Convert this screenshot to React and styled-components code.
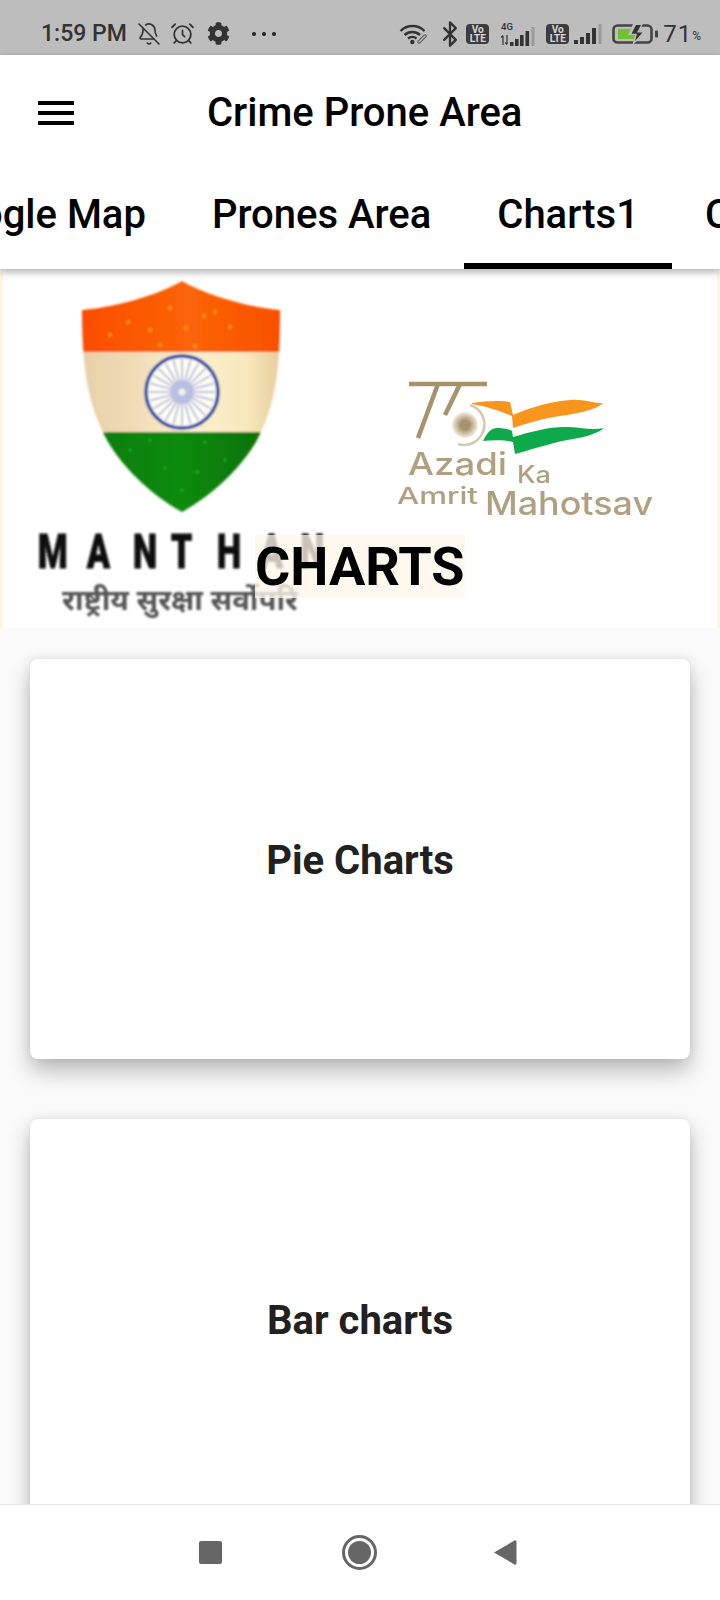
import React from "react";
import styled, { createGlobalStyle } from "styled-components";
import { BellOff, AlarmClock, Bluetooth } from "lucide-react";
import { FaCog } from "react-icons/fa";

const Global = createGlobalStyle`
  html, body { margin: 0; padding: 0; background: #fafafa; }
  body { font-family: Roboto, "Liberation Sans", sans-serif; }
  * { box-sizing: border-box; }
`;

const Page = styled.div`
  width: 720px;
  height: 1600px;
  display: flex;
  flex-direction: column;
  overflow: hidden;
  background: #fafafa;
`;

const StatusBar = styled.div`
  height: 55px;
  flex: none;
  background: #bdbdbd;
  color: #333;
  display: flex;
  align-items: center;
  justify-content: space-between;
  padding: 12px 19px 0 41px;
`;

const StatusGroup = styled.div`
  display: flex;
  align-items: center;
`;

const Slot = styled.span`
  display: flex;
  align-items: center;
  margin-left: ${(p) => p.$gap || 0}px;
`;

const Time = styled.span`
  font-size: 23px;
  font-weight: 500;
  line-height: 26px;
  color: #333;
  white-space: nowrap;
`;

const Dots = styled.span`
  display: flex;
  gap: 6px;
  margin-left: 22px;
  & > i {
    width: 4px;
    height: 4px;
    border-radius: 50%;
    background: #222;
  }
`;

const VoLte = styled.span`
  width: 23px;
  height: 20px;
  border-radius: 4px;
  background: #3c3c3c;
  color: #d8d8d8;
  display: flex;
  flex-direction: column;
  align-items: center;
  justify-content: center;
  font-size: 10px;
  font-weight: 700;
  line-height: 9px;
`;

const Percent = styled.span`
  font-size: 24px;
  font-weight: 400;
  line-height: 26px;
  letter-spacing: 1px;
  color: #333;
`;

const PercentSign = styled.span`
  font-size: 12px;
  line-height: 26px;
  margin-top: 5px;
  color: #333;
`;

const Header = styled.header`
  position: relative;
  z-index: 2;
  flex: none;
  background: #fff;
  box-shadow: 0 3px 8px rgba(0, 0, 0, 0.32);
`;

const AppBar = styled.div`
  height: 100px;
  display: flex;
  align-items: center;
  padding: 15px 0 0 38px;
`;

const Title = styled.h1`
  margin: 0 0 0 133px;
  font-size: 40px;
  font-weight: 500;
  color: #000;
  line-height: 46px;
  white-space: nowrap;
`;

const TabBar = styled.nav`
  height: 114px;
  display: flex;
  overflow: hidden;
  margin-left: -103px;
`;

const Tab = styled.div`
  flex: none;
  height: 100%;
  padding: 11px 33px 1px;
  display: flex;
  align-items: center;
  font-size: 40px;
  font-weight: 500;
  color: #000;
  white-space: nowrap;
  border-bottom: 6px solid ${(p) => (p.$active ? "#000" : "transparent")};
`;

const Content = styled.main`
  flex: 1;
  min-height: 0;
  overflow: hidden;
`;

const Banner = styled.section`
  position: relative;
  height: 359px;
  display: flex;
  background: #fff;
  border-left: 3px solid #fff3e4;
  border-right: 3px solid #fff3e4;
`;

const LeftLogo = styled.svg`
  flex: none;
  margin-left: 27px;
  width: 310px;
  height: 359px;
`;

const RightLogo = styled.svg`
  flex: none;
  margin-left: 50px;
  width: 280px;
  height: 359px;
`;

const Heading = styled.h2`
  position: absolute;
  left: 252px;
  top: 266px;
  margin: 0;
  height: 63px;
  background: rgba(255, 246, 235, 0.78);
  font-size: 54px;
  font-weight: 700;
  line-height: 63px;
  color: #000;
  white-space: nowrap;
`;

const CardList = styled.div`
  padding: 31px 30px 0;
  display: flex;
  flex-direction: column;
  gap: 60px;
`;

const Card = styled.div`
  flex: none;
  height: 400px;
  padding-top: 2px;
  border-radius: 8px;
  background: #fff;
  display: flex;
  align-items: center;
  justify-content: center;
  font-size: 40px;
  font-weight: 700;
  color: #212121;
  box-shadow: 0 12px 22px rgba(0, 0, 0, 0.26), 0 0 10px rgba(0, 0, 0, 0.08);
`;

const NavBar = styled.footer`
  position: relative;
  z-index: 2;
  flex: none;
  height: 96px;
  background: #fff;
  border-top: 1px solid #e6e6e6;
  display: flex;
  align-items: center;
  padding: 0 0 0 199px;
`;

const NavSquare = styled.span`
  width: 23px;
  height: 23px;
  border-radius: 2px;
  background: #666;
`;

const NavHome = styled.span`
  width: 35px;
  height: 35px;
  margin-left: 120px;
  border-radius: 50%;
  border: 3px solid #666;
  padding: 3px;
  &::before {
    content: "";
    display: block;
    width: 23px;
    height: 23px;
    border-radius: 50%;
    background: #666;
  }
`;

const NavBack = styled.svg`
  width: 24px;
  height: 27px;
  margin-left: 116px;
`;

const Wifi = () => (
  <svg width="28" height="22" viewBox="0 0 28 22" fill="none">
    <path d="M1.5 8 A17 17 0 0 1 25.5 8" stroke="#333" strokeWidth="2.4" />
    <path d="M5.5 12 A11.5 11.5 0 0 1 21 12" stroke="#333" strokeWidth="2.4" />
    <path d="M9 15.5 A6.5 6.5 0 0 1 17.5 15.5" stroke="#333" strokeWidth="2.4" />
    <circle cx="13.3" cy="19" r="2.2" fill="#333" />
    <path d="M20 19 L26 13" stroke="#555" strokeWidth="3.4" strokeLinecap="round" />
    <path d="M20 19 L26 13" stroke="#bdbdbd" strokeWidth="1.4" strokeLinecap="round" />
  </svg>
);

const Signal4G = () => (
  <svg width="37" height="24" viewBox="0 0 37 24">
    <text x="1" y="8" fontFamily="Roboto, sans-serif" fontSize="9.5" fontWeight="500" fill="#333">4G</text>
    <path d="M3 23V14M1.2 15.5L3 13.5M7 13V22M5.2 20.5L7 22.5" stroke="#333" strokeWidth="1.2" fill="none" />
    <rect x="10" y="20" width="3.6" height="4" fill="#333" />
    <rect x="15" y="17" width="3.6" height="7" fill="#333" />
    <rect x="20" y="13" width="3.6" height="11" fill="#333" />
    <rect x="25.5" y="9" width="3.6" height="15" fill="#333" />
    <rect x="31.5" y="5" width="3" height="19" fill="#999" />
  </svg>
);

const Signal = () => (
  <svg width="28" height="20" viewBox="0 0 28 20">
    <rect x="0" y="16" width="4" height="4" fill="#333" />
    <rect x="6" y="13" width="4" height="7" fill="#333" />
    <rect x="12" y="9" width="4" height="11" fill="#333" />
    <rect x="18" y="4" width="4" height="16" fill="#333" />
    <rect x="24.5" y="0" width="3" height="20" fill="#999" />
  </svg>
);

const Battery = () => (
  <svg width="46" height="24" viewBox="0 0 46 24">
    <rect x="1.5" y="3.5" width="38" height="17" rx="4" fill="none" stroke="#444" strokeWidth="2.6" />
    <rect x="43" y="8.5" width="3" height="7" rx="1" fill="#444" />
    <rect x="6" y="7" width="22" height="10" fill="#6cc22f" />
    <path d="M22 0 L32 0 L27 9 L34 9 L20 24 L23 13 L16 13 Z" fill="#bdbdbd" />
    <path d="M24 3 L29 3 L25 10.5 L30.5 10.5 L23 19 L25 11.8 L19.5 11.8 Z" fill="#333" />
  </svg>
);

const SPECKS = [
  [128, 322], [150, 330], [170, 308], [186, 328], [204, 316], [230, 327], [195, 346], [215, 312], [160, 345], [110, 335],
];
const GREEN_SPECKS = [
  [165, 468], [197, 472], [225, 460], [130, 450], [182, 490], [205, 442], [150, 440],
];

const ManthanLogo = () => (
  <LeftLogo viewBox="30 269 310 359" role="img" aria-label="Manthan">
    <defs>
      <clipPath id="shieldClip">
        <path d="M182 281 C160 294 118 307 82 310 C82 370 88 405 108 442 C126 472 155 497 182 512 C209 497 238 472 256 442 C276 405 280 370 280 310 C246 307 204 294 182 281 Z" />
      </clipPath>
      <linearGradient id="cream" x1="0" x2="1" y1="0" y2="0">
        <stop offset="0" stopColor="#e5cda4" />
        <stop offset="0.3" stopColor="#f1dcb6" />
        <stop offset="0.55" stopColor="#fbf0cf" />
        <stop offset="0.8" stopColor="#f8e8bd" />
        <stop offset="1" stopColor="#e4c694" />
      </linearGradient>
      <linearGradient id="saffron" x1="0" x2="1" y1="0" y2="0">
        <stop offset="0" stopColor="#fb4a05" />
        <stop offset="0.55" stopColor="#fb6407" />
        <stop offset="1" stopColor="#f94d04" />
      </linearGradient>
      <linearGradient id="greenBand" x1="0" x2="1" y1="0" y2="0">
        <stop offset="0" stopColor="#0a7a08" />
        <stop offset="0.5" stopColor="#0b8a08" />
        <stop offset="1" stopColor="#066a06" />
      </linearGradient>
      <filter id="soft" x="-5%" y="-5%" width="110%" height="110%">
        <feGaussianBlur stdDeviation="0.8" />
      </filter>
    </defs>
    <g filter="url(#soft)">
      <g clipPath="url(#shieldClip)">
        <rect x="70" y="275" width="220" height="77" fill="url(#saffron)" />
        <rect x="70" y="352" width="220" height="80" fill="url(#cream)" />
        <rect x="70" y="432" width="220" height="85" fill="url(#greenBand)" />
        {SPECKS.map(([x, y]) => (
          <circle key={`${x}-${y}`} cx={x} cy={y} r="2" fill="#ff9a1a" />
        ))}
        {GREEN_SPECKS.map(([x, y]) => (
          <circle key={`${x}-${y}`} cx={x} cy={y} r="1.6" fill="#22b022" />
        ))}
      </g>
      <circle cx="182" cy="392" r="36" fill="#fffdf2" stroke="#1f3fa6" strokeWidth="3.5" />
      {Array.from({ length: 24 }, (_, i) => {
        const a = (i * Math.PI) / 12;
        return (
          <line
            key={i}
            x1={182 + 8 * Math.cos(a)}
            y1={392 + 8 * Math.sin(a)}
            x2={182 + 33 * Math.cos(a)}
            y2={392 + 33 * Math.sin(a)}
            stroke="#b4bbdf"
            strokeWidth="1.8"
          />
        );
      })}
      <circle cx="182" cy="392" r="12" fill="#b9bfe0" />
      <circle cx="182" cy="392" r="3.5" fill="#f2f0ee" />
    </g>
    <g filter="url(#soft)">
      <text
        transform="scale(0.7 1)"
        y="568"
        x="54 124 190 244 310 371 429"
        fontFamily="Roboto, sans-serif"
        fontSize="49"
        fontWeight="900"
        fill="#0c0c0c"
        stroke="#0c0c0c"
        strokeWidth="0.8"
      >
        MANTHAN
      </text>
      <text
        x="62"
        y="610"
        fontFamily="'Noto Sans', sans-serif"
        fontSize="28"
        fontWeight="700"
        fill="#555"
        textLength="236"
        lengthAdjust="spacingAndGlyphs"
      >
        राष्ट्रीय सुरक्षा सर्वोपरि
      </text>
    </g>
  </LeftLogo>
);

const AzadiLogo = () => (
  <RightLogo viewBox="390 269 280 359" role="img" aria-label="Azadi Ka Amrit Mahotsav">
    <defs>
      <filter id="softer" x="-5%" y="-5%" width="110%" height="110%">
        <feGaussianBlur stdDeviation="0.6" />
      </filter>
      <radialGradient id="hub">
        <stop offset="0.35" stopColor="#a8926c" />
        <stop offset="1" stopColor="#f4efe6" />
      </radialGradient>
    </defs>
    <g filter="url(#softer)">
      <path d="M409 384 H487" stroke="#a8926c" strokeWidth="4.5" />
      <path d="M438 384 L418 438" stroke="#a8926c" strokeWidth="4.5" />
      <path d="M460 384 L445 415" stroke="#a8926c" strokeWidth="4.5" />
      <path d="M470 405 A20 20 0 0 1 458 444" stroke="#d4c8b0" strokeWidth="2.5" fill="none" />
      <circle cx="465" cy="425" r="13" fill="url(#hub)" />
      <path d="M472 403 C485 401 500 400 510 402 L513 415 C525 410 545 402 570 400 C585 399 595 404 603 403 C596 410 575 414 560 416 C545 418 528 423 513 428 L512 416 C500 411 485 406 472 404 Z" fill="#f8951d" />
      <path d="M483 441 C487 433 491 428 497 428 C503 428 509 429 512 431 L513 437 C530 432 548 427 565 427 C580 427 592 431 604 428 C596 435 580 438 567 440 C548 444 530 450 515 454 L513 442 C504 440 494 440 483 441 Z" fill="#0ba94c" />
      <g fontFamily="Inter, 'Open Sans', sans-serif" fill="#b0a081" fontWeight="500">
        <text x="408" y="475" fontSize="31" textLength="99" lengthAdjust="spacingAndGlyphs">Azadi</text>
        <text x="517" y="483" fontSize="24" textLength="34" lengthAdjust="spacingAndGlyphs">Ka</text>
        <text x="397" y="504" fontSize="23" textLength="81" lengthAdjust="spacingAndGlyphs">Amrit</text>
        <text x="485" y="515" fontSize="32" textLength="168" lengthAdjust="spacingAndGlyphs">Mahotsav</text>
      </g>
    </g>
  </RightLogo>
);

export default function App() {
  return (
    <Page>
      <Global />
      <StatusBar>
        <StatusGroup>
          <Time>1:59 PM</Time>
          <Slot $gap={10}><BellOff size={24} strokeWidth={1.6} color="#333" /></Slot>
          <Slot $gap={9}><AlarmClock size={25} strokeWidth={1.7} color="#333" /></Slot>
          <Slot $gap={12}><FaCog size={23} color="#333" /></Slot>
          <Dots><i /><i /><i /></Dots>
        </StatusGroup>
        <StatusGroup>
          <Wifi />
          <Slot $gap={9}><Bluetooth size={28} strokeWidth={2} color="#333" /></Slot>
          <Slot $gap={2}><VoLte><span>Vo</span><span>LTE</span></VoLte></Slot>
          <Slot $gap={11}><Signal4G /></Slot>
          <Slot $gap={9}><VoLte><span>Vo</span><span>LTE</span></VoLte></Slot>
          <Slot $gap={5}><Signal /></Slot>
          <Slot $gap={10}><Battery /></Slot>
          <Slot $gap={5}><Percent>71</Percent></Slot>
          <PercentSign>%</PercentSign>
        </StatusGroup>
      </StatusBar>
      <Header>
        <AppBar>
          <svg width="36" height="24" viewBox="0 0 36 24" fill="#000">
            <rect y="0" width="36" height="4" />
            <rect y="10" width="36" height="4" />
            <rect y="20" width="36" height="4" />
          </svg>
          <Title>Crime Prone Area</Title>
        </AppBar>
        <TabBar>
          <Tab>Google Map</Tab>
          <Tab>Prones Area</Tab>
          <Tab $active>Charts1</Tab>
          <Tab>Charts2</Tab>
        </TabBar>
      </Header>
      <Content>
        <Banner>
          <ManthanLogo />
          <AzadiLogo />
          <Heading>CHARTS</Heading>
        </Banner>
        <CardList>
          <Card>Pie Charts</Card>
          <Card>Bar charts</Card>
        </CardList>
      </Content>
      <NavBar>
        <NavSquare />
        <NavHome />
        <NavBack viewBox="0 0 24 27">
          <path d="M1 13.5 L21.5 1.5 Q23.5 0.8 23.5 3 V24 Q23.5 26.2 21.5 25.5 Z" fill="#666" />
        </NavBack>
      </NavBar>
    </Page>
  );
}
